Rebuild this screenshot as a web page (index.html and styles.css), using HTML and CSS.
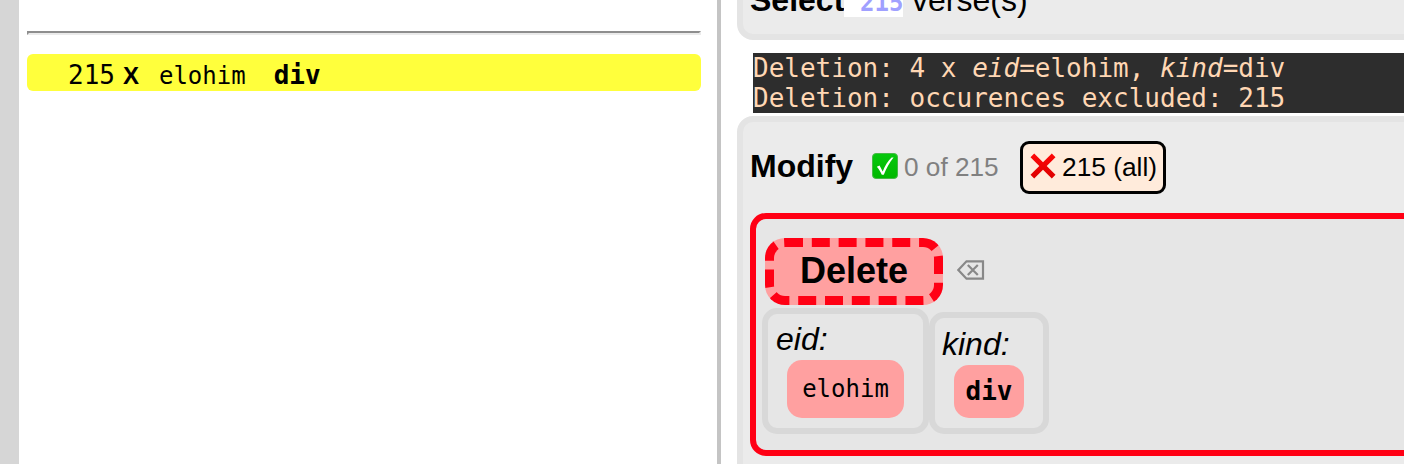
FILE: index.html
```html
<!DOCTYPE html>
<html lang="en">
<head>
<meta charset="utf-8">
<title>Annotation editor</title>
<link rel="stylesheet" href="styles.css">
</head>
<body>
<div class="app">
  <aside class="strip"></aside>
  <section class="results">
    <hr class="rule">
    <div class="entity"><span class="freq">215</span><span class="times">X</span><span class="eid">elohim</span><span class="kind">div</span></div>
  </section>
  <main class="tools">
    <section class="panel select">
      <b>Select</b><span class="count">215</span><span class="verses">verse(s)</span>
    </section>
    <div class="log">
      <p>Deletion: 4 x <i>eid</i>=elohim, <i>kind</i>=div</p>
      <p>Deletion: occurences excluded: 215</p>
    </div>
    <section class="panel modify">
      <div class="heading">
        <b class="title">Modify</b>
        <span class="included">
          <svg class="mark" viewBox="0 0 26 26"><defs><linearGradient id="g" x2="0" y2="1"><stop stop-color="#06c80d"/><stop offset="1" stop-color="#00b800"/></linearGradient></defs><rect x=".5" y=".5" width="25" height="25" rx="3.5" fill="url(#g)" stroke="#47b947"/><path d="M4.8 13.8 7.6 12.5 10.7 18.4C13 12.5 16 8 19.6 4.6H21.6C17.7 9.5 14.3 15.4 11.8 21.7H9.8C8.4 18.7 6.9 16.2 4.8 13.8Z" fill="#fff"/></svg>
          <span>0 of 215</span>
        </span>
        <button class="excluded">
          <svg class="mark" viewBox="0 0 26 26"><defs><linearGradient id="r" x2="0" y2="1"><stop stop-color="#ff0707"/><stop offset="1" stop-color="#dc0000"/></linearGradient></defs><path d="M4.2.5 13 9.3 21.8.5 25.5 4.2 16.7 13 25.5 21.8 21.8 25.5 13 16.7 4.2 25.5.5 21.8 9.3 13 .5 4.2Z" fill="url(#r)"/></svg>
          <span>215 (all)</span>
        </button>
      </div>
      <div class="editor">
        <div class="actions">
          <button class="delete">Delete</button>
          <svg class="clear" viewBox="0 0 28 20"><path d="M1.3 10 9.5 1.3H26V18.7H9.5Z M10.8 5 20.8 15 M20.8 5 10.8 15" fill="none" stroke="#888" stroke-width="2.2"/></svg>
        </div>
        <div class="fields">
          <div class="field field-eid"><i>eid:</i><span class="chip">elohim</span></div>
          <div class="field field-kind"><i>kind:</i><span class="chip">div</span></div>
        </div>
      </div>
    </section>
  </main>
</div>
</body>
</html>
```
FILE: styles.css
```css
* { box-sizing: border-box; }
body { margin: 0; overflow: hidden; background: #fff; color: #000; font-family: "Liberation Sans", Arial, sans-serif; }
button { font-family: inherit; color: inherit; margin: 0; }
svg { display: block; flex: none; }
.app { display: flex; width: 1404px; height: 464px; overflow: hidden; }
.strip { width: 19px; background: #d6d6d6; flex: none; }
.results { width: 702px; flex: none; padding: 31px 16px 0 8px; border-right: 4px solid #c4c4c4; }
.rule { margin: 0 0 19px; height: 4px; border: 2px solid; border-color: #8e8e8e #ebebeb #ebebeb #8e8e8e; }
.entity { display: flex; align-items: baseline; height: 37px; padding-left: 41px; border-radius: 6px; background: #ffff3c; font: 26px/42px "DejaVu Sans Mono", monospace; white-space: pre; }
.times { width: 16px; margin-left: 8px; font: bold 24px/40px "Liberation Sans", Arial, sans-serif; }
.eid { margin-left: 20px; font-size: 24px; }
.kind { margin-left: 28px; font-weight: bold; }
.tools { width: 683px; flex: none; padding-left: 16px; }
.panel { width: 700px; border: 6px solid #e4e4e4; background: #ebebeb; }
.select { display: flex; align-items: baseline; height: 62px; margin: -22px 0 13px; padding-left: 7px; border-radius: 0 0 0 16px; font-size: 32px; line-height: 32px; }
.select b { width: 94px; }
.count { height: 28px; width: 59px; padding: 2px 0 0 16px; background: #fff; color: #a0a0ff; font: bold 24px/24px "DejaVu Sans Mono", monospace; }
.verses { margin-left: 9px; }
.log { height: 60px; margin-left: 16px; background: #2d2d2d; color: #ffd7b4; font: 26px/30px "DejaVu Sans Mono", monospace; white-space: nowrap; }
.log p { margin: 0; }
.modify { height: 370px; margin-top: 3px; padding: 19px 0 0 7px; border-radius: 16px 0 0 0; }
.heading { display: flex; align-items: center; height: 53px; font-size: 26px; line-height: 30px; }
.title { width: 122px; margin-top: -4px; font-size: 32px; line-height: 36px; }
.included { display: flex; width: 148px; margin-top: -2px; gap: 6px; color: #808080; font-size: 26.2px; }
.mark { width: 26px; height: 26px; margin-top: 1px; }
.excluded { display: flex; align-items: center; width: 146px; height: 53px; gap: 6px; padding: 0 0 2px 7px; border: 3px solid #000; border-radius: 9px; background: #ffebdb; font-size: 26.3px; line-height: 30px; white-space: nowrap; }
.excluded .mark { margin-top: -1px; }
.editor { width: 700px; height: 243px; margin: 19px 0 0; padding: 19px 0 0 6px; border: 6px solid #ff0014; border-radius: 16px; background: #e6e6e6; }
.actions { display: flex; align-items: center; gap: 14px; height: 67px; padding-left: 3px; }
.delete { width: 178px; height: 67px; padding: 0 0 2px; border: 9px dashed #ff0014; border-radius: 20px; background: #ffa0a0; font-size: 36px; font-weight: bold; line-height: 40px; }
.clear { width: 28px; height: 20px; margin-top: -3px; }
.fields { display: flex; align-items: flex-end; height: 129px; }
.field { display: flex; flex-direction: column; border: 6px solid #d8d8d8; border-radius: 15px; font-size: 32px; line-height: 36px; }
.field-eid { width: 167px; height: 126px; padding: 7px 0 0 8px; }
.field-kind { width: 120px; height: 122px; padding: 8px 0 0 7px; }
.chip { border-radius: 15px; background: #ffa0a0; text-align: center; font-family: "DejaVu Sans Mono", monospace; }
.field-eid .chip { width: 117px; height: 58px; margin: 3px 0 0 11px; font-size: 24px; line-height: 58px; }
.field-kind .chip { width: 70px; height: 53px; margin: 3px 0 0 12px; font-size: 26px; line-height: 52px; font-weight: bold; }
```
